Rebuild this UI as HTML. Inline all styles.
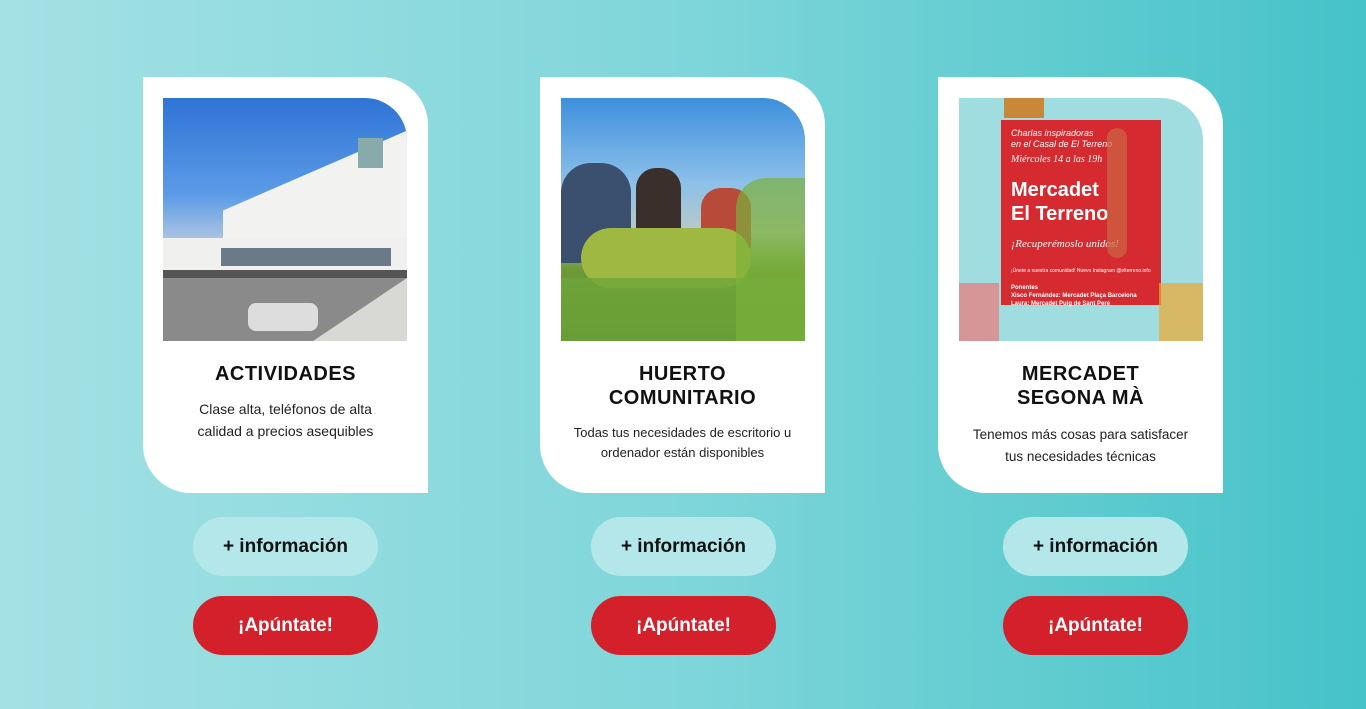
<!DOCTYPE html>
<html><head><meta charset="utf-8">
<style>
*{margin:0;padding:0;box-sizing:border-box}
html,body{width:1366px;height:709px;overflow:hidden}
body{background:linear-gradient(90deg,#a3e1e4 0%,#7fd6da 50%,#45c3c8 100%);font-family:"Liberation Sans",sans-serif;position:relative}
.card{position:absolute;top:77px;width:285px;height:416px;background:#fff;border-radius:0 48px 0 48px}
.img{position:absolute;left:21px;top:21px;width:244px;height:243px;border-radius:0 42px 0 0;overflow:hidden}
.t{position:absolute;left:0;right:0;text-align:center;color:#111;font-weight:bold;font-size:20px;letter-spacing:.5px;line-height:24px}
.d{position:absolute;text-align:center;color:#222;font-size:14px;line-height:22px}
.btn{position:absolute;width:185px;height:59px;border-radius:30px;text-align:center;line-height:59px;font-weight:bold;font-size:19px}
.info{background:#b3e7e9;color:#111;top:517px}
.ap{background:#d3202a;color:#fff;top:596px}
</style></head><body>

<div class="card" style="left:143px">
 <div class="img" style="left:20px;background:linear-gradient(180deg,#2f74d6 0%,#5c9be6 40%,#e0e0e0 70%,#9a9a9a 100%)">
  <div style="position:absolute;left:60px;top:30px;width:190px;height:150px;background:#f2f2f0;clip-path:polygon(0 55%,100% 0,100% 100%,0 100%)"></div>
  <div style="position:absolute;left:0;top:140px;width:244px;height:35px;background:#f0f0ee"></div>
  <div style="position:absolute;left:58px;top:150px;width:170px;height:18px;background:#6b7a88"></div>
  <div style="position:absolute;left:0;top:172px;width:244px;height:8px;background:#555"></div>
  <div style="position:absolute;left:0;top:180px;width:244px;height:63px;background:#8a8a8a"></div>
  <div style="position:absolute;left:150px;top:180px;width:94px;height:63px;background:#d8d8d4;clip-path:polygon(100% 0,100% 100%,0 100%)"></div>
  <div style="position:absolute;left:85px;top:205px;width:70px;height:28px;background:#ddd;border-radius:8px"></div>
  <div style="position:absolute;left:195px;top:40px;width:25px;height:30px;background:#8aa"></div>
 </div>
 <div class="t" style="top:285px">ACTIVIDADES</div>
 <div class="d" style="top:321px;left:36px;right:36px">Clase alta, teléfonos de alta calidad a precios asequibles</div>
</div>

<div class="card" style="left:540px">
 <div class="img" style="background:linear-gradient(180deg,#3d8fdc 0%,#8dc0ea 35%,#b9c9c8 55%,#6e9a3a 70%,#4d7d28 100%)">
  <div style="position:absolute;left:0;top:65px;width:70px;height:100px;background:#3b4f6e;border-radius:30px 30px 0 0"></div>
  <div style="position:absolute;left:75px;top:70px;width:45px;height:80px;background:#3a2f2a;border-radius:20px 20px 0 0"></div>
  <div style="position:absolute;left:140px;top:90px;width:50px;height:60px;background:#b84a3a;border-radius:20px 20px 0 0"></div>
  <div style="position:absolute;left:20px;top:130px;width:170px;height:60px;background:#9fb842;border-radius:30px"></div>
  <div style="position:absolute;left:0;top:180px;width:244px;height:63px;background:#6ea63a;opacity:.8"></div>
  <div style="position:absolute;left:175px;top:80px;width:69px;height:163px;background:#7bb13a;opacity:.7;border-radius:30px 0 0 0"></div>
 </div>
 <div class="t" style="top:285px">HUERTO<br>COMUNITARIO</div>
 <div class="d" style="top:346px;left:18px;right:18px;font-size:13px;line-height:20px">Todas tus necesidades de escritorio u ordenador están disponibles</div>
</div>

<div class="card" style="left:938px">
 <div class="img" style="background:#9fdde0">
  <div style="position:absolute;left:42px;top:22px;width:160px;height:185px;background:#d52a2f"></div>
  <div style="position:absolute;left:52px;top:30px;color:#fff;font-size:9px;font-style:italic;line-height:11px">Charlas inspiradoras<br>en el Casal de El Terreno</div>
  <div style="position:absolute;left:52px;top:56px;color:#fff;font-size:10px;font-family:'Liberation Serif',serif;font-style:italic">Miércoles 14 a las 19h</div>
  <div style="position:absolute;left:52px;top:80px;color:#fff;font-size:20px;font-weight:900;line-height:24px">Mercadet<br>El Terreno</div>
  <div style="position:absolute;left:52px;top:140px;color:#fff;font-size:11px;font-family:'Liberation Serif',serif;font-style:italic">¡Recuperémoslo unidos!</div>
  <div style="position:absolute;left:52px;top:170px;color:#fff;font-size:5px">¡Únete a nuestra comunidad! Nuevo Instagram @elterreno.info</div>
  <div style="position:absolute;left:52px;top:186px;color:#fff;font-size:6px;line-height:8px;font-weight:bold">Ponentes<br>Xisco Fernández: Mercadet Plaça Barcelona<br>Laura: Mercadet Puig de Sant Pere</div>
  <div style="position:absolute;left:148px;top:30px;width:20px;height:130px;background:#c64;border-radius:10px;opacity:.7"></div>
  <div style="position:absolute;left:0;top:185px;width:40px;height:58px;background:#e77;opacity:.7"></div>
  <div style="position:absolute;left:200px;top:185px;width:44px;height:58px;background:#f0a830;opacity:.7"></div>
  <div style="position:absolute;left:45px;top:0;width:40px;height:20px;background:#c9873a"></div>
 </div>
 <div class="t" style="top:285px">MERCADET<br>SEGONA MÀ</div>
 <div class="d" style="top:347px;left:26px;right:26px;font-size:13.5px">Tenemos más cosas para satisfacer tus necesidades técnicas</div>
</div>

<div class="btn info" style="left:193px">+ información</div>
<div class="btn ap" style="left:193px">¡Apúntate!</div>
<div class="btn info" style="left:591px">+ información</div>
<div class="btn ap" style="left:591px">¡Apúntate!</div>
<div class="btn info" style="left:1003px">+ información</div>
<div class="btn ap" style="left:1003px">¡Apúntate!</div>
</body></html>
